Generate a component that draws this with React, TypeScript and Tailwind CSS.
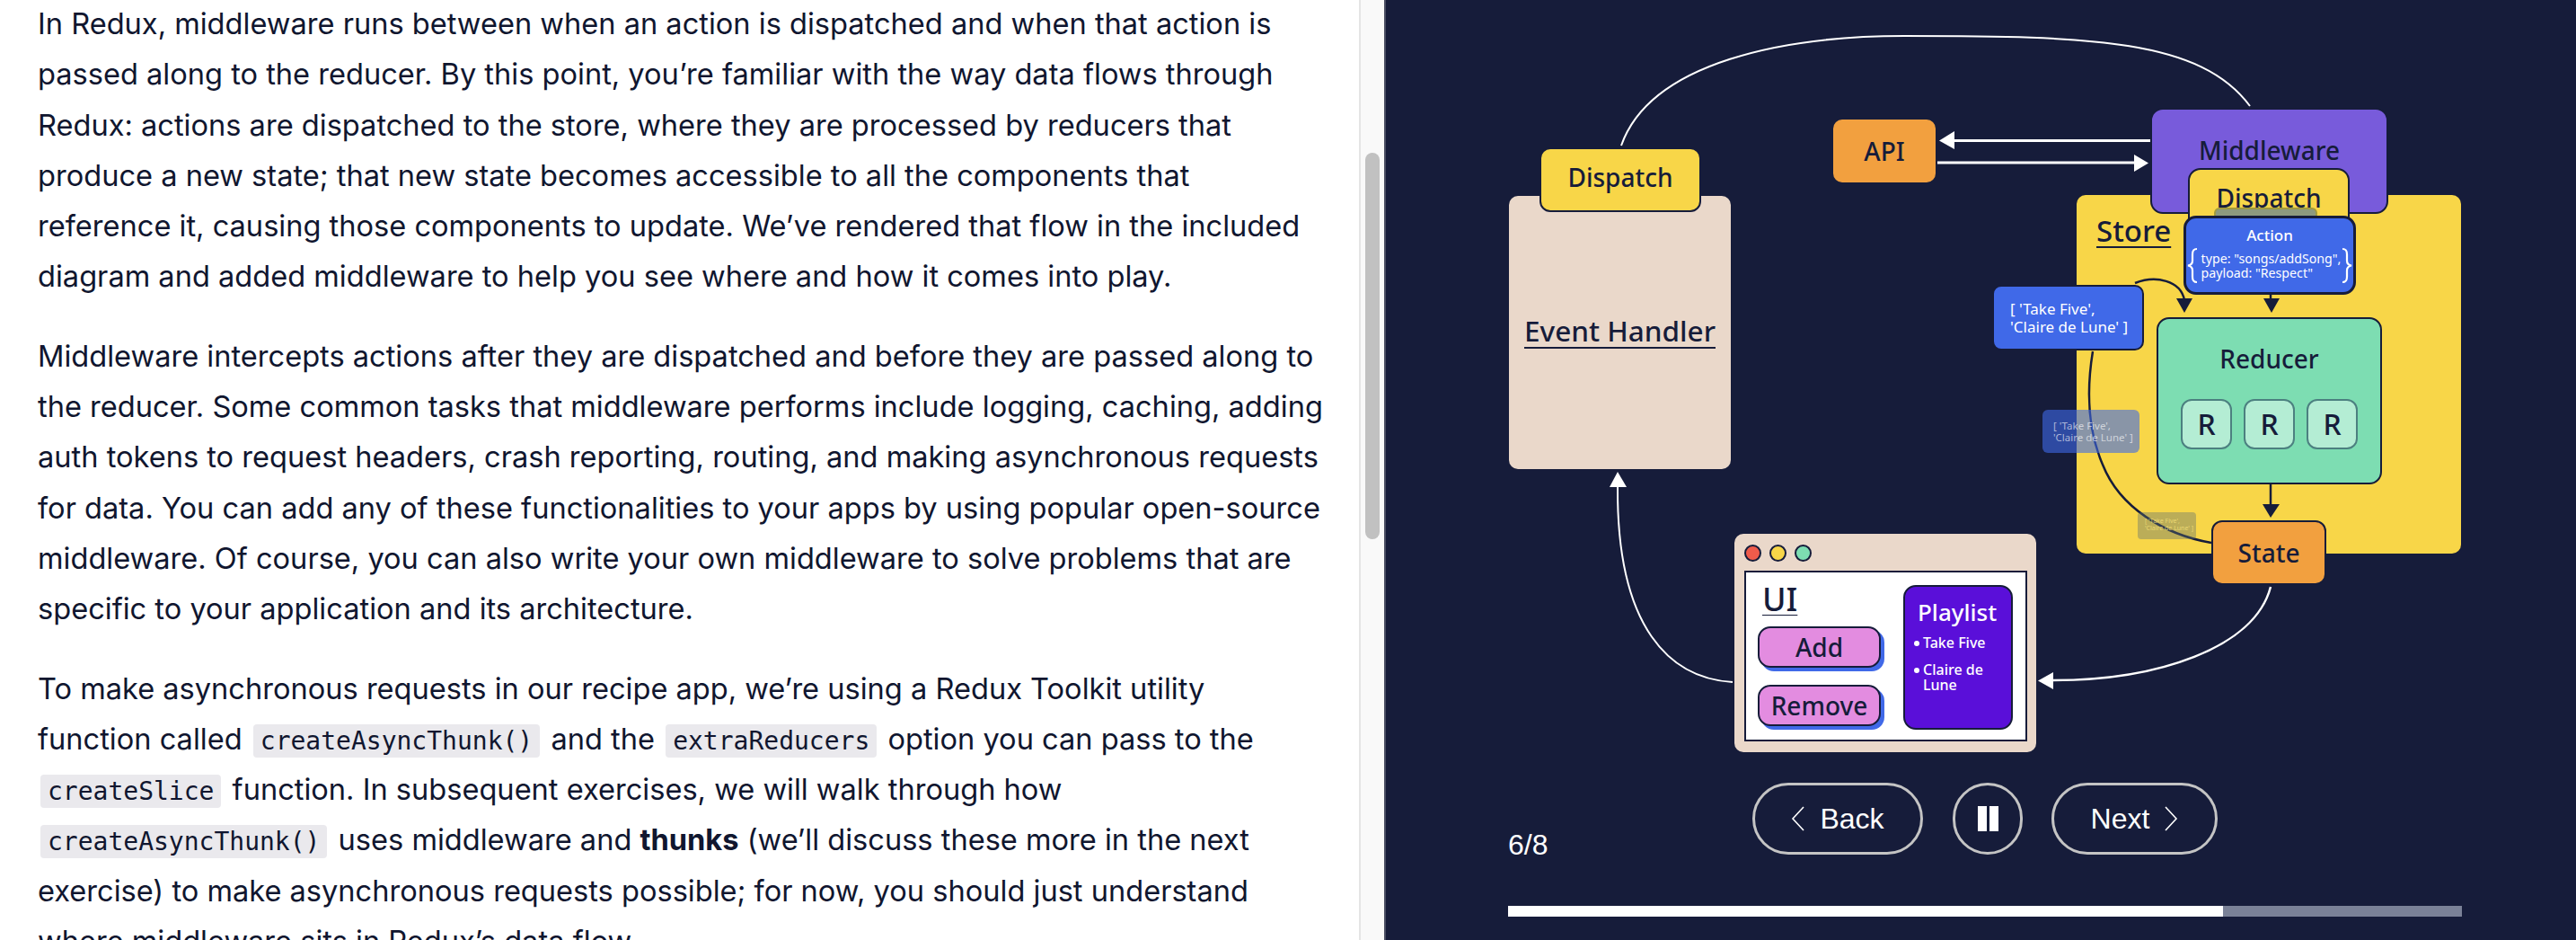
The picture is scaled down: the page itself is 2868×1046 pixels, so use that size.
const navy = '#161c3a'

function Chevron({ dir }: { dir: 'left' | 'right' }) {
  return (
    <svg width="16" height="28" viewBox="0 0 16 28" fill="none" stroke="#ffffff" strokeWidth="1.6">
      <polyline points={dir === 'left' ? '14,1 2,14 14,27' : '2,1 14,14 2,27'} />
    </svg>
  )
}

function Brace({ flip }: { flip?: boolean }) {
  return (
    <svg width="12" height="41" viewBox="0 0 12 41" fill="none" stroke="#ffffff" strokeWidth="2.2" className={flip ? '-scale-x-100' : ''}>
      <path d="M11 2 C7 2 6 4 6 8 V15 C6 18 4 20 1 20.5 C4 21 6 23 6 26 V33 C6 37 7 39 11 39" />
    </svg>
  )
}

function Code({ children }: { children: string }) {
  return (
    <code className="bg-[#eae9ed] rounded-[4px] px-[8px] py-[2px] mx-[3px] text-[28px] leading-[28px] font-['DejaVu_Sans_Mono',monospace]">
      {children}
    </code>
  )
}

function Article() {
  return (
    <div className="w-[1513px] h-[1046px] shrink-0 overflow-hidden pl-[42px] whitespace-nowrap text-[32.6px] leading-[56.3px] text-[#10162f] font-['Inter',sans-serif]">
      <div className="-mt-[2px] space-y-[32px]">
        <p>
          In Redux, middleware runs between when an action is dispatched and when that action is<br />
          passed along to the reducer. By this point, you’re familiar with the way data flows through<br />
          Redux: actions are dispatched to the store, where they are processed by reducers that<br />
          produce a new state; that new state becomes accessible to all the components that<br />
          reference it, causing those components to update. We’ve rendered that flow in the included<br />
          diagram and added middleware to help you see where and how it comes into play.
        </p>
        <p>
          Middleware intercepts actions after they are dispatched and before they are passed along to<br />
          the reducer. Some common tasks that middleware performs include logging, caching, adding<br />
          auth tokens to request headers, crash reporting, routing, and making asynchronous requests<br />
          for data. You can add any of these functionalities to your apps by using popular open-source<br />
          middleware. Of course, you can also write your own middleware to solve problems that are<br />
          specific to your application and its architecture.
        </p>
        <p>
          To make asynchronous requests in our recipe app, we’re using a Redux Toolkit utility<br />
          function called <Code>createAsyncThunk()</Code> and the <Code>extraReducers</Code> option you can pass to the<br />
          <Code>createSlice</Code> function. In subsequent exercises, we will walk through how<br />
          <Code>createAsyncThunk()</Code> uses middleware and <strong>thunks</strong> (we’ll discuss these more in the next<br />
          exercise) to make asynchronous requests possible; for now, you should just understand<br />
          where middleware sits in Redux’s data flow.
        </p>
      </div>
    </div>
  )
}

function Diagram() {
  return (
    <div className="relative w-full h-[871px] font-['Noto_Sans',sans-serif] text-[#161c3a]">
      {/* store side */}
      <div className="absolute left-[769px] top-[217px] w-[428px] h-[399px] bg-[#f8d648] rounded-[10px] pl-[22px] pt-[17px]">
        <span className="block text-[33px] font-medium leading-[46px] underline underline-offset-[5px] decoration-2 text-[#161c3a]">Store</span>
      </div>
      <div className="absolute left-[851px] top-[120px] w-[265px] h-[118px] bg-[#785bdb] border-2 border-[#161c3a] rounded-[14px] pt-[23px] text-center text-[28px] leading-[44px] font-medium">
        Middleware
      </div>
      <div className="absolute left-[893px] top-[187px] w-[180px] h-[60px] bg-[#f8d648] border-2 border-[#161c3a] rounded-t-[14px] pt-[10px] text-center text-[28px] leading-[42px] font-medium">
        Dispatch
      </div>
      <div className="absolute left-[922px] top-[231px] w-[115px] h-[14px] bg-[#8d9a7f] border-2 border-[#a19b3e] rounded-[6px]" />

      {/* arrows and curves */}
      <svg className="absolute left-0 top-0" width="1325" height="871" viewBox="1543 0 1325 871" fill="none">
        <path d="M1805 162 C1838 68 1990 40 2120 40 C2330 40 2450 44 2505 118" stroke="#ffffff" strokeWidth="2" />
        <path d="M2176 156.5 H2394" stroke="#ffffff" strokeWidth="3" />
        <polygon points="2159,156.5 2176,146 2176,166" fill="#ffffff" />
        <path d="M2157 181 H2378" stroke="#ffffff" strokeWidth="3" />
        <polygon points="2392,181.5 2376,172 2376,191" fill="#ffffff" />
        <path d="M1929 759 C1860 755 1800 700 1801 542" stroke="#ffffff" strokeWidth="2" />
        <polygon points="1801,525 1792,542 1811,542" fill="#ffffff" />
        <path d="M2528 653 C2510 722 2400 757 2286 757" stroke="#ffffff" strokeWidth="2.5" />
        <polygon points="2269,757.5 2286,748 2286,767" fill="#ffffff" />
        <path d="M2377 315 C2400 306 2428 312 2432 334" stroke="#161c3a" strokeWidth="2.5" />
        <polygon points="2432,348 2423,332 2441,332" fill="#161c3a" />
        <path d="M2528 328 V334" stroke="#161c3a" strokeWidth="2.5" />
        <polygon points="2529,348 2520,332 2538,332" fill="#161c3a" />
        <path d="M2528 539 V562" stroke="#161c3a" strokeWidth="2.5" />
        <polygon points="2528,576 2519,561 2538,561" fill="#161c3a" />
        <path d="M2330 391 C2322 440 2325 480 2341 517 C2360 565 2410 595 2462 604" stroke="#161c3a" strokeWidth="2.5" />
      </svg>

      <div className="absolute left-[888px] top-[240px] w-[192px] h-[88px] bg-[#4069e8] border-[3px] border-[#161c3a] rounded-[14px] text-white flex flex-col items-center">
        <span className="text-[17px] leading-[24px] mt-[7px] font-medium">Action</span>
        <div className="flex items-center mt-[1px]">
          <Brace />
          <span className="text-[14.2px] leading-[16px] whitespace-nowrap ml-[4px] mr-[1px]">
            type: "songs/addSong",<br />payload: "Respect"
          </span>
          <Brace flip />
        </div>
      </div>

      <div className="absolute left-[675px] top-[317px] w-[169px] h-[73px] bg-[#4069e8] border-2 border-[#161c3a] rounded-[10px] pl-[18px] pt-[15px] text-white text-[17px] leading-[20px] whitespace-nowrap">
        [ 'Take Five',<br />'Claire de Lune' ]
      </div>

      <div className="absolute left-[858px] top-[353px] w-[251px] h-[186px] bg-[#7dddb2] border-2 border-[#161c3a] rounded-[14px] flex flex-col items-center">
        <span className="text-[28px] leading-[40px] mt-[24px] font-medium">Reducer</span>
        <div className="flex gap-[13px] mt-[25px]">
          {['a', 'b', 'c'].map(k => (
            <div key={k} className="w-[57px] h-[56px] bg-[#b4edd4] border-2 border-[#4c8080] rounded-[12px] flex items-center justify-center text-[32px] font-medium">
              R
            </div>
          ))}
        </div>
      </div>

      <div className="absolute left-[919px] top-[579px] w-[128px] h-[72px] bg-[#f2a03f] border-2 border-[#161c3a] rounded-[12px] flex items-center justify-center text-[28px] font-medium">
        State
      </div>

      {/* fading copies of the array */}
      <div className="absolute left-[731px] top-[456px] w-[108px] h-[48px] bg-[#4069e8]/60 rounded-[6px] pl-[12px] pt-[11px] text-white/60 text-[11.5px] leading-[13px] whitespace-nowrap">
        [ 'Take Five',<br />'Claire de Lune' ]
      </div>
      <div className="absolute left-[837px] top-[570px] w-[65px] h-[30px] bg-[#5f7070]/40 rounded-[4px] pl-[8px] pt-[6px] text-[#f8e27a]/80 text-[7px] leading-[8px] whitespace-nowrap">
        [ 'Take Five',<br />'Claire de Lune' ]
      </div>

      {/* left side */}
      <div className="absolute left-[137px] top-[218px] w-[247px] h-[304px] bg-[#ead8ca] rounded-[10px] flex items-center justify-center pb-[4px]">
        <span className="text-[31.5px] font-medium underline underline-offset-[6px] decoration-2">Event Handler</span>
      </div>
      <div className="absolute left-[171px] top-[164px] w-[180px] h-[72px] bg-[#f8d648] border-2 border-[#161c3a] rounded-[12px] flex items-center justify-center pb-[6px] text-[28px] font-medium">
        Dispatch
      </div>
      <div className="absolute left-[498px] top-[133px] w-[114px] h-[70px] bg-[#f2a03f] rounded-[10px] flex items-center justify-center text-[28px] font-medium">
        API
      </div>

      {/* browser window */}
      <div className="absolute left-[388px] top-[594px] w-[336px] h-[243px] bg-[#ead8ca] rounded-[10px] px-[11px] pt-[12px]">
        <div className="flex gap-[9px]">
          <span className="w-[19px] h-[19px] rounded-full border-2 border-[#161c3a] bg-[#ef5b4b]" />
          <span className="w-[19px] h-[19px] rounded-full border-2 border-[#161c3a] bg-[#f8d648]" />
          <span className="w-[19px] h-[19px] rounded-full border-2 border-[#161c3a] bg-[#7dddb2]" />
        </div>
        <div className="mt-[10px] w-[315px] h-[190px] bg-white border-2 border-[#161c3a] flex pl-[13px] pt-[12px]">
          <div className="w-[148px]">
            <span className="block ml-[5px] text-[36px] leading-[36px] font-medium underline underline-offset-[4px] decoration-1">UI</span>
            <button className="block mt-[12px] w-[137px] h-[46px] bg-[#e38ce0] border-2 border-[#161c3a] rounded-[14px] shadow-[4px_4px_0_#4069e8] text-[28px] leading-[38px] font-medium">Add</button>
            <button className="block mt-[19px] w-[137px] h-[46px] bg-[#e38ce0] border-2 border-[#161c3a] rounded-[14px] shadow-[4px_4px_0_#4069e8] text-[28px] leading-[38px] font-medium">Remove</button>
          </div>
          <div className="ml-[14px] mt-[2px] w-[122px] h-[161px] bg-[#5a0fd9] border-2 border-[#161c3a] rounded-[14px] text-white pl-[14px] pt-[10px]">
            <div className="text-[26px] leading-[36px] font-medium">Playlist</div>
            <ul className="mt-[8px] -ml-[4px] text-[16px] font-medium leading-[17px]">
              <li className="flex gap-[4px]"><span className="w-[6px] h-[6px] mt-[6px] shrink-0 rounded-full bg-white" />Take Five</li>
              <li className="flex gap-[4px] mt-[13px]"><span className="w-[6px] h-[6px] mt-[6px] shrink-0 rounded-full bg-white" /><span>Claire de<br />Lune</span></li>
            </ul>
          </div>
        </div>
      </div>
    </div>
  )
}

function Controls() {
  return (
    <div className="pl-[136px] font-['Liberation_Sans',sans-serif] text-white text-[32px] leading-[36px]">
      <div className="flex h-[80px]">
        <span className="w-[272px] pt-[51px]">6/8</span>
        <button className="w-[190px] h-[80px] border-[3px] border-[#c4c4c4] rounded-full flex items-center justify-center gap-[16px]">
          <Chevron dir="left" />
          Back
        </button>
        <button className="ml-[33px] w-[78px] h-[80px] border-[3px] border-[#c4c4c4] rounded-full flex items-center justify-center gap-[3px]">
          <span className="w-[10px] h-[28px] bg-white" />
          <span className="w-[10px] h-[28px] bg-white" />
        </button>
        <button className="ml-[32px] w-[185px] h-[80px] border-[3px] border-[#c4c4c4] rounded-full flex items-center justify-center gap-[16px]">
          Next
          <Chevron dir="right" />
        </button>
      </div>
      <div className="mt-[57px] w-[1062px] h-[12px] bg-[#7a8197]">
        <div className="w-[796px] h-full bg-white" />
      </div>
    </div>
  )
}

export default function App() {
  return (
    <div className="flex w-[2868px] h-[1046px] overflow-hidden bg-white">
      <Article />
      <div className="w-[28px] h-full shrink-0 bg-[#f9f9f9] border-l-2 border-[#e5e5e5] pl-[5px] pt-[170px]">
        <div className="w-[16px] h-[430px] rounded-full bg-[#c1c1c1]" />
      </div>
      <div className="flex-1 h-full border-l-2 border-[#4a4e63]" style={{ backgroundColor: navy }}>
        <Diagram />
        <Controls />
      </div>
    </div>
  )
}
